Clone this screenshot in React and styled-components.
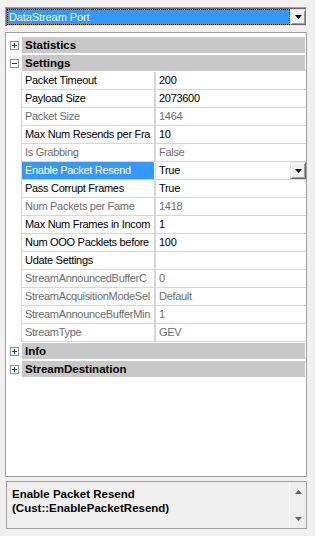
import React from 'react';
import styled, { createGlobalStyle } from 'styled-components';

const GlobalStyle = createGlobalStyle`
  html, body {
    margin: 0;
    padding: 0;
    background: #f0f0f0;
  }
  body {
    font-family: "Liberation Sans", Arial, sans-serif;
    font-size: 11px;
    color: #000;
  }
`;

// names are shown as far as the name column lets them show
const rows = [
  { cat: true, name: 'Statistics' },
  { cat: true, name: 'Settings', open: true },
  { name: 'Packet Timeout', value: '200' },
  { name: 'Payload Size', value: '2073600' },
  { name: 'Packet Size', value: '1464', readOnly: true },
  { name: 'Max Num Resends per Fra', value: '10' },
  { name: 'Is Grabbing', value: 'False', readOnly: true },
  { name: 'Enable Packet Resend', value: 'True', selected: true },
  { name: 'Pass Corrupt Frames', value: 'True' },
  { name: 'Num Packets per Fame', value: '1418', readOnly: true },
  { name: 'Max Num Frames in Incom', value: '1' },
  { name: 'Num OOO Packlets before', value: '100' },
  { name: 'Udate Settings', value: '' },
  { name: 'StreamAnnouncedBufferC', value: '0', readOnly: true },
  { name: 'StreamAcquisitionModeSel', value: 'Default', readOnly: true },
  { name: 'StreamAnnounceBufferMin', value: '1', readOnly: true },
  { name: 'StreamType', value: 'GEV', readOnly: true },
  { cat: true, name: 'Info' },
  { cat: true, name: 'StreamDestination' },
];

const Window = styled.div`
  display: flex;
  flex-direction: column;
  padding: 7px 8px 0 5px;
  height: 536px;
  box-sizing: border-box;
`;

const Combo = styled.div`
  display: flex;
  height: 20px;
  box-sizing: border-box;
  padding: 1px 0 1px 1px;
  background: #fff;
  border-top: 1px solid #a0a0a0;
  border-left: 1px solid #a0a0a0;
  border-right: 1px solid #fff;
  border-bottom: 1px solid #fff;
  box-shadow: inset 1px 1px 0 #696969, inset -1px -1px 0 #e3e3e3;
`;

const ComboText = styled.div`
  flex: 1;
  background: #3399ff;
  color: #fff;
  line-height: 14px;
  padding-left: 1px;
  letter-spacing: -0.1px;
  border: 1px solid #d08020;
  outline: 1px dotted #000;
  outline-offset: -1px;
`;

const DropButton = styled.div`
  width: 16px;
  height: ${(p) => p.$h || 16}px;
  flex: none;
  box-sizing: border-box;
  display: flex;
  align-items: center;
  justify-content: center;
  background: #f0f0f0;
  border-top: 1px solid #e3e3e3;
  border-left: 1px solid #e3e3e3;
  border-right: 1px solid #696969;
  border-bottom: 1px solid #696969;
  box-shadow: inset 1px 1px 0 #fff, inset -1px -1px 0 #a0a0a0;
`;

const GridPanel = styled.div`
  margin-top: 5px;
  height: 445px;
  box-sizing: border-box;
  border: 1px solid #a0a0a0;
  background: #fff;
  padding-top: 3px;
`;

const Row = styled.div`
  display: flex;
  height: 18px;
  box-sizing: border-box;
`;

const Margin = styled.div`
  width: ${(p) => p.$w}px;
  flex: none;
  display: flex;
  align-items: center;
  padding-left: 4px;
  box-sizing: border-box;
`;

const CategoryBar = styled.div`
  flex: 1;
  margin: 1px 1px 1px 0;
  background: #c8c8c8;
  font-weight: bold;
  font-size: 11.5px;
  line-height: 16px;
  padding-left: 3px;
`;

const PropLine = styled.div`
  flex: 1;
  display: flex;
  border-left: 1px solid #d6d6d6;
  border-bottom: 1px solid #d6d6d6;
`;

const NameCell = styled.div`
  width: 133px;
  flex: none;
  padding-left: 3px;
  box-sizing: border-box;
  line-height: 17px;
  white-space: nowrap;
  overflow: hidden;
  letter-spacing: -0.3px;
  background: ${(p) => (p.$selected ? '#3399ff' : 'transparent')};
  color: ${(p) => (p.$selected ? '#fff' : p.$readOnly ? '#6d6d6d' : '#000')};
  border-right: 1px solid ${(p) => (p.$selected ? '#fff' : '#d6d6d6')};
  box-shadow: 1px 0 0 #d6d6d6;
`;

const ValueCell = styled.div`
  flex: 1;
  display: flex;
  align-items: center;
  min-width: 0;
  padding-left: 4px;
  line-height: 17px;
  letter-spacing: -0.3px;
  color: ${(p) => (p.$readOnly ? '#6d6d6d' : '#000')};
`;

const ValueText = styled.span`
  flex: 1;
`;

const HelpPanel = styled.div`
  margin-top: 4px;
  height: 48px;
  box-sizing: border-box;
  border: 1px solid #a0a0a0;
  margin-left: 1px;
  display: flex;
`;

const HelpText = styled.div`
  flex: 1;
  padding: 5px 0 0 5px;
  font-weight: bold;
  font-size: 11.5px;
  line-height: 14px;
  white-space: nowrap;
`;

const ScrollBar = styled.div`
  width: 17px;
  flex: none;
  border-left: 1px solid #fafafa;
  background: #efefef;
  display: flex;
  flex-direction: column;
  justify-content: space-between;
  align-items: center;
  padding: 8px 0 7px;
  box-sizing: border-box;
`;

const Arrow = ({ up, color = '#000' }) => (
  <svg width="7" height="4" viewBox="0 0 7 4">
    {up ? (
      <polygon points="3.5,0 7,4 0,4" fill={color} />
    ) : (
      <polygon points="0,0 7,0 3.5,4" fill={color} />
    )}
  </svg>
);

const Expander = ({ open }) => (
  <svg width="9" height="9" viewBox="0 0 9 9">
    <rect x="0.5" y="0.5" width="8" height="8" fill="#fff" stroke="#8391a8" />
    <line x1="2" y1="4.5" x2="7" y2="4.5" stroke="#22367a" />
    {!open && <line x1="4.5" y1="2" x2="4.5" y2="7" stroke="#22367a" />}
  </svg>
);

export default function App() {
  return (
    <Window>
      <GlobalStyle />
      <Combo>
        <ComboText>DataStream Port</ComboText>
        <DropButton>
          <Arrow />
        </DropButton>
      </Combo>
      <GridPanel>
        {rows.map((r) =>
          r.cat ? (
            <Row key={r.name}>
              <Margin $w={16}>
                <Expander open={r.open} />
              </Margin>
              <CategoryBar>{r.name}</CategoryBar>
            </Row>
          ) : (
            <Row key={r.name}>
              <Margin $w={15} />
              <PropLine>
                <NameCell $selected={r.selected} $readOnly={r.readOnly}>
                  {r.name}
                </NameCell>
                <ValueCell $readOnly={r.readOnly}>
                  <ValueText>{r.value}</ValueText>
                  {r.selected && (
                    <DropButton $h={17}>
                      <Arrow />
                    </DropButton>
                  )}
                </ValueCell>
              </PropLine>
            </Row>
          )
        )}
      </GridPanel>
      <HelpPanel>
        <HelpText>
          Enable Packet Resend
          <br />
          (Cust::EnablePacketResend)
        </HelpText>
        <ScrollBar>
          <Arrow up color="#606060" />
          <Arrow color="#606060" />
        </ScrollBar>
      </HelpPanel>
    </Window>
  );
}
